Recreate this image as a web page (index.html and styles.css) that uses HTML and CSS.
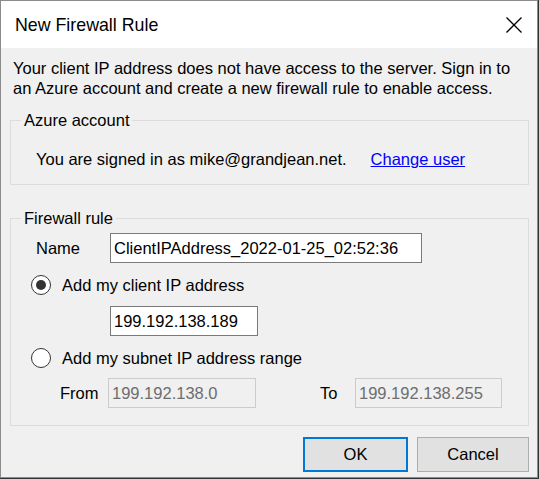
FILE: index.html
```html
<!DOCTYPE html>
<html lang="en">
<head>
<meta charset="utf-8">
<title>New Firewall Rule</title>
<link rel="stylesheet" href="styles.css">
</head>
<body>
<div class="window">
  <div class="titlebar">
    <span class="title">New Firewall Rule</span>
    <svg class="close" viewBox="0 0 16 16" width="16" height="16" aria-label="Close">
      <path d="M0.5 0.5 L15.5 15.5 M15.5 0.5 L0.5 15.5" stroke="#000" stroke-width="1.3" fill="none"/>
    </svg>
  </div>
  <div class="content">
    <p class="desc">Your client IP address does not have access to the server. Sign in to<br>an Azure account and create a new firewall rule to enable access.</p>
    <fieldset class="group azure">
      <legend>Azure account</legend>
      <div class="signed">
        <span class="signed-text">You are signed in as mike@grandjean.net.</span>
        <a class="link" href="#">Change user</a>
      </div>
    </fieldset>
    <fieldset class="group rule">
      <legend>Firewall rule</legend>
      <div class="name-row">
        <span class="name-label">Name</span>
        <div class="field name-field">ClientIPAddress_2022-01-25_02:52:36</div>
      </div>
      <div class="radio-row first">
        <span class="radio checked"></span>
        <span>Add my client IP address</span>
      </div>
      <div class="ip-row">
        <div class="field ip-field">199.192.138.189</div>
      </div>
      <div class="radio-row second">
        <span class="radio"></span>
        <span>Add my subnet IP address range</span>
      </div>
      <div class="range-row">
        <span class="from-label">From</span>
        <div class="field disabled from-field">199.192.138.0</div>
        <span class="to-label">To</span>
        <div class="field disabled to-field">199.192.138.255</div>
      </div>
    </fieldset>
    <div class="buttons">
      <button class="btn ok">OK</button>
      <button class="btn cancel">Cancel</button>
    </div>
  </div>
</div>
</body>
</html>
```
FILE: styles.css
```css
* {
  box-sizing: border-box;
}

body {
  margin: 0;
  background: #2f3338;
  font-family: "Liberation Sans", Arial, sans-serif;
}

.window {
  width: 538px;
  height: 478px;
  border: 1px solid #8c8c8c;
  background: #f0f0f0;
  display: flex;
  flex-direction: column;
}

.titlebar {
  height: 47px;
  flex: none;
  background: #ffffff;
  display: flex;
  align-items: center;
  justify-content: space-between;
  padding: 0 15px 0 14px;
}

.title {
  font-size: 17.8px;
  line-height: 20px;
  color: #000;
}

.close {
  display: block;
  width: 16px;
  height: 16px;
}

.content {
  padding: 0 8px 0 9px;
  font-size: 16.5px;
  line-height: 20px;
  color: #000;
}

.desc {
  margin: 0;
  padding: 10px 0 0 3px;
}

.group {
  margin: 0;
  border: 1px solid #dcdcdc;
  min-width: 0;
}

.group legend {
  margin-left: 10px;
  padding: 0 3px;
  line-height: 20px;
}

.azure {
  margin-top: 12px;
  padding: 19px 0 15px 0;
}

.signed {
  display: flex;
  align-items: center;
  height: 20px;
  padding-left: 25px;
}

.link {
  margin-left: 24px;
  color: #0000ff;
  text-decoration: underline;
}

.rule {
  margin-top: 23px;
  padding: 5px 0 17px 0;
}

.name-row {
  display: flex;
  align-items: center;
  height: 30px;
}

.name-label {
  margin-left: 25px;
  width: 74px;
}

.field {
  height: 30px;
  border: 1px solid #7a7a7a;
  background: #ffffff;
  padding: 0 3px;
  display: flex;
  align-items: center;
  white-space: nowrap;
  overflow: hidden;
}

.field.disabled {
  border-color: #cccccc;
  background: #f0f0f0;
  color: #6d6d6d;
}

.name-field {
  width: 312px;
}

.radio-row {
  display: flex;
  align-items: center;
  height: 20px;
  padding-left: 20px;
}

.radio-row.first {
  margin-top: 12px;
}

.radio-row.second {
  margin-top: 12px;
}

.radio {
  width: 20px;
  height: 20px;
  margin-right: 11px;
  border-radius: 50%;
  border: 1.5px solid #333333;
  background: #ffffff;
  display: flex;
  align-items: center;
  justify-content: center;
}

.radio.checked::after {
  content: "";
  width: 10px;
  height: 10px;
  border-radius: 50%;
  background: #333333;
}

.ip-row {
  margin-top: 11px;
  padding-left: 99px;
  display: flex;
}

.ip-field {
  width: 148px;
}

.range-row {
  margin-top: 10px;
  display: flex;
  align-items: center;
  height: 30px;
}

.from-label {
  margin-left: 49px;
  width: 48px;
}

.from-field {
  width: 148px;
}

.to-label {
  margin-left: 64px;
  width: 35px;
}

.to-field {
  width: 147px;
}

.buttons {
  margin-top: 11px;
  display: flex;
  justify-content: flex-end;
  gap: 9px;
}

.btn {
  height: 35px;
  background: #e1e1e1;
  border: 1px solid #adadad;
  font-family: inherit;
  font-size: 16.5px;
  color: #000;
  padding: 0;
}

.btn.ok {
  width: 105px;
  border: 2px solid #0078d7;
}

.btn.cancel {
  width: 112px;
}
```
